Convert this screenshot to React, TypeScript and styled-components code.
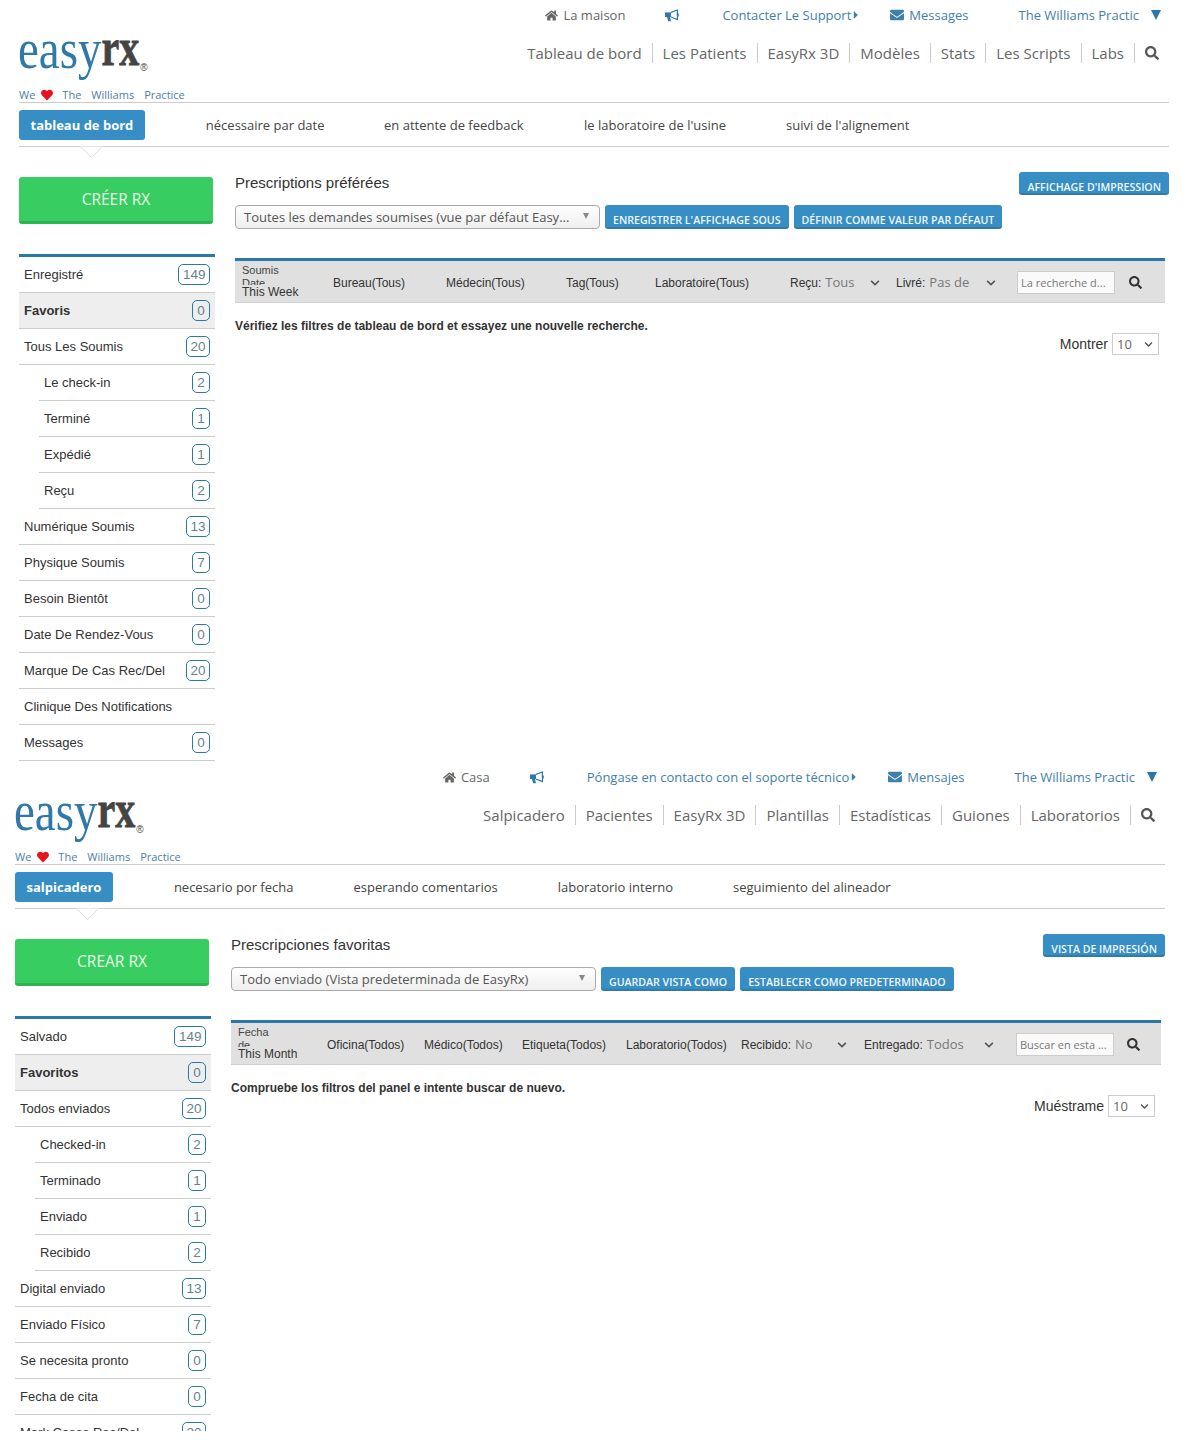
import React from "react";
import styled, { createGlobalStyle } from "styled-components";
import { FaHome, FaEnvelope, FaSearch, FaCaretRight, FaHeart, FaChevronDown } from "react-icons/fa";

const Global = createGlobalStyle`
  html, body { margin: 0; padding: 0; background: #fff; }
  * { box-sizing: border-box; }
`;

const SANS = `"Liberation Sans", Arial, sans-serif`;
const OPEN = `"Open Sans", "Noto Sans", sans-serif`;
const BLUE = "#2a78a8";
const BTN = "#368ec4";

const Page = styled.div`
  height: 1431px;
  overflow: hidden;
  background: #fff;
`;

const Section = styled.section<{ $left: number; $height: number }>`
  margin-left: ${(p) => p.$left}px;
  width: 1150px;
  height: ${(p) => p.$height}px;
`;

const TopBar = styled.div`
  height: 30px;
  display: flex;
  justify-content: flex-end;
  align-items: center;
  padding-right: 8px;
  font: 13px/30px ${OPEN};
  color: #2f78a8;
`;
const TopItem = styled.span<{ $gap: number; $grey?: boolean }>`
  display: inline-flex;
  align-items: center;
  margin-left: ${(p) => p.$gap}px;
  color: ${(p) => (p.$grey ? "#666" : "#3f80ab")};
  white-space: nowrap;
  svg { flex: none; }
`;
const IconLeft = styled.span<{ $w: number }>`
  display: inline-flex;
  width: ${(p) => p.$w}px;
`;
const CaretIcon = styled(FaCaretRight)`
  margin-left: -1px;
`;
const HornIcon = styled.svg`
  width: 14px;
  height: 13px;
  color: #2f78a8;
`;
const Triangle = styled.span`
  width: 0;
  height: 0;
  margin-left: 12px;
  border-left: 5px solid transparent;
  border-right: 5px solid transparent;
  border-top: 10px solid ${BLUE};
`;

const BrandRow = styled.div`
  height: 73px;
  display: flex;
  justify-content: space-between;
  align-items: flex-start;
  border-bottom: 1px solid #ccc;
`;
const BrandBlock = styled.div`
  display: flex;
  flex-direction: column;
`;
const Logo = styled.div`
  height: 58px;
  display: flex;
  align-items: flex-start;
  white-space: nowrap;
  line-height: 1;
`;
const LogoEasy = styled.span`
  font: 47px/47px "Liberation Serif", serif;
  color: #2f78a8;
  transform: scaleY(1.22);
  transform-origin: 0 36px;
  margin: -2px 0 0 -1px;
  height: 47px;
`;
const LogoRx = styled.span`
  font: bold 40px/47px "Liberation Serif", serif;
  color: #444;
  -webkit-text-stroke: 0.6px #444;
  transform: scaleY(1.3);
  transform-origin: 0 36px;
  margin-top: -2px;
  height: 47px;
`;
const LogoMark = styled.span`
  font: 10px/10px ${SANS};
  color: #444;
  margin: 33px 0 0 1px;
`;
const Tagline = styled.div`
  display: flex;
  align-items: center;
  height: 14px;
  font: 11px/14px ${OPEN};
  color: #4a80a8;
`;
const TagWord = styled.span<{ $gap?: number }>`
  margin-right: ${(p) => p.$gap ?? 10}px;
`;
const TagHeart = styled.span`
  display: inline-flex;
  color: #e8141c;
  margin-right: 9px;
`;

const MainNav = styled.nav`
  display: flex;
  align-items: center;
  margin-top: 13px;
  padding-right: 10px;
  height: 20px;
`;
const NavLink = styled.span`
  padding: 0 10px;
  height: 20px;
  font: 15px/20px ${OPEN};
  color: #666;
  border-right: 1px solid #ccc;
  white-space: nowrap;
`;
const NavSearch = styled.span`
  display: inline-flex;
  margin-left: 10px;
  color: #555;
`;

const Tabs = styled.div`
  position: relative;
  height: 44px;
  padding-top: 7px;
  display: flex;
  align-items: flex-start;
  border-bottom: 1px solid #ccc;
  font: 13px/30px ${OPEN};
  color: #444;
`;
const ActiveTab = styled.span`
  height: 30px;
  padding: 0 11.5px;
  background: ${BTN};
  color: #fff;
  font-weight: 700;
  border-radius: 3px;
  white-space: nowrap;
`;
const Tab = styled.span<{ $gap: number }>`
  margin-left: ${(p) => p.$gap}px;
  white-space: nowrap;
`;
const Notch = styled.span`
  position: absolute;
  left: 63.5px;
  top: 34.5px;
  width: 17px;
  height: 17px;
  background: #fff;
  border-right: 1px solid #ddd;
  border-bottom: 1px solid #ddd;
  transform: rotate(45deg);
  clip-path: polygon(100% 0, 100% 100%, 0 100%);
`;

const Body = styled.div`
  display: grid;
  grid-template-columns: 196px 1fr;
  column-gap: 20px;
`;
const Sidebar = styled.aside`
  padding-top: 30px;
`;
const CreateButton = styled.div`
  width: 194px;
  height: 47px;
  background: #37cd60;
  border-bottom: 3px solid #2eb354;
  border-radius: 3px;
  text-align: center;
  font: 15.5px/44px ${OPEN};
  color: #e9fbe9;
`;
const SideList = styled.ul`
  list-style: none;
  margin: 30px 0 0;
  padding: 0;
  border-top: 3px solid ${BLUE};
`;
const SideRow = styled.li<{ $sub?: boolean; $active?: boolean }>`
  height: 36px;
  margin-left: ${(p) => (p.$sub ? 20 : 0)}px;
  padding: 0 5px;
  display: flex;
  align-items: center;
  justify-content: space-between;
  border-bottom: 1px solid #ccc;
  background: ${(p) => (p.$active ? "#eee" : "transparent")};
  font: ${(p) => (p.$active ? "bold" : "normal")} 13px/20px ${SANS};
  color: #333;
`;
const Badge = styled.span`
  min-width: 18px;
  height: 21px;
  padding: 0 3.5px;
  text-align: center;
  border: 1px solid ${BLUE};
  border-radius: 5px;
  font: 13.5px/19px ${SANS};
  color: #667f92;
`;

const Main = styled.div`
  padding-top: 25px;
  min-width: 0;
`;
const TitleRow = styled.div`
  height: 23px;
  display: flex;
  justify-content: space-between;
  align-items: center;
`;
const Title = styled.h2`
  margin: 0 0 2px;
  font: 15px/22px ${SANS};
  color: #333;
`;
const ActionButton = styled.span<{ $gap?: number; $h?: number }>`
  height: ${(p) => p.$h ?? 24}px;
  margin-left: ${(p) => p.$gap ?? 0}px;
  padding: 8px 8px 0;
  background: ${BTN};
  border-bottom: 2px solid #2f7cab;
  border-radius: 3px;
  font: 600 10.6px/14px ${OPEN};
  color: #f1f7fb;
  white-space: nowrap;
`;
const ViewRow = styled.div`
  margin-top: 10px;
  height: 24px;
  display: flex;
`;
const ViewSelect = styled.div`
  width: 365px;
  height: 24px;
  padding: 0 10px 0 8px;
  display: flex;
  align-items: center;
  justify-content: space-between;
  border: 1px solid #aaa;
  border-radius: 4px;
  background: linear-gradient(#fff, #eee);
  font: 13px/22px ${OPEN};
  color: #555;
  white-space: nowrap;
`;
const SelectArrow = styled.span`
  width: 0;
  height: 0;
  margin-bottom: 3px;
  border-left: 3.5px solid transparent;
  border-right: 3.5px solid transparent;
  border-top: 6px solid #888;
`;

const FilterBar = styled.div<{ $cols: string; $pad: number }>`
  margin-top: 29px;
  margin-right: 4px;
  height: 45px;
  padding: 2px 0 0 ${(p) => p.$pad}px;
  display: grid;
  grid-template-columns: ${(p) => p.$cols};
  align-items: center;
  background: #e0e0e0;
  border-top: 3px solid ${BLUE};
  border-bottom: 1px solid #d0d0d0;
  font: 12px/14px ${SANS};
  color: #333;
`;
const DateCell = styled.div`
  display: flex;
  flex-direction: column;
  margin-top: -4px;
`;
const DateLabel = styled.div`
  width: 42px;
  height: 21px;
  overflow: hidden;
  font: 11px/13px ${SANS};
  color: #444;
`;
const DateValue = styled.div`
  margin-top: 1px;
  font: 12px/12px ${SANS};
  color: #333;
  white-space: nowrap;
`;
const FilterCell = styled.span`
  white-space: nowrap;
`;
const DropCell = styled.div<{ $pad: number }>`
  display: flex;
  justify-content: space-between;
  align-items: center;
  padding-right: ${(p) => p.$pad}px;
  white-space: nowrap;
`;
const DropValue = styled.span`
  font: 13px/14px ${OPEN};
  color: #777;
  margin-left: 4px;
`;
const SearchBox = styled.div`
  width: 98px;
  height: 23px;
  padding-left: 3px;
  background: #fafafa;
  border: 1px solid #ccc;
  font: 11px/21px ${OPEN};
  color: #777;
  white-space: nowrap;
  overflow: hidden;
`;
const BarSearch = styled.span`
  display: inline-flex;
  margin-left: 14px;
  color: #333;
`;
const Message = styled.p`
  margin: 16px 0 0;
  font: bold 12px/14px ${SANS};
  color: #333;
`;
const ShowRow = styled.div`
  padding-right: 10px;
  display: flex;
  justify-content: flex-end;
  align-items: center;
  font: 14px/22px ${SANS};
  color: #333;
`;
const ShowSelect = styled.span`
  width: 47px;
  height: 22px;
  margin-left: 4px;
  padding: 0 5px 0 4px;
  display: flex;
  align-items: center;
  justify-content: space-between;
  border: 1px solid #ccc;
  font: 13px/20px ${OPEN};
  color: #666;
`;
const Chevron = styled(FaChevronDown)`
  color: #555;
`;

type Row = { label: string; count?: number; sub?: boolean; active?: boolean };
type Data = {
  left: number;
  height: number;
  home: string;
  support: string;
  messages: string;
  nav: string[];
  active: string;
  tabs: string[];
  tabGaps: number[];
  create: string;
  title: string;
  print: string;
  view: string;
  save: string;
  setDefault: string;
  cols: string;
  dateLabel: string;
  dateValue: string;
  filters: string[];
  drop1: [string, string, number];
  drop2: [string, string, number];
  placeholder: string;
  message: string;
  show: string;
  rows: Row[];
};

const pages: Data[] = [
  {
    left: 19,
    height: 762,
    home: "La maison",
    support: "Contacter Le Support",
    messages: "Messages",
    nav: ["Tableau de bord", "Les Patients", "EasyRx 3D", "Modèles", "Stats", "Les Scripts", "Labs"],
    active: "tableau de bord",
    tabs: ["nécessaire par date", "en attente de feedback", "le laboratoire de l'usine", "suivi de l'alignement"],
    tabGaps: [61, 59.5, 60.5, 60],
    create: "CRÉER RX",
    title: "Prescriptions préférées",
    print: "AFFICHAGE D'IMPRESSION",
    view: "Toutes les demandes soumises (vue par défaut Easy...",
    save: "ENREGISTRER L'AFFICHAGE SOUS",
    setDefault: "DÉFINIR COMME VALEUR PAR DÉFAUT",
    cols: "91px 113px 120px 89px 135px 106px 121px 98px auto",
    dateLabel: "Soumis Date",
    dateValue: "This Week",
    filters: ["Bureau(Tous)", "Médecin(Tous)", "Tag(Tous)", "Laboratoire(Tous)"],
    drop1: ["Reçu:", "Tous", 16],
    drop2: ["Livré:", "Pas de", 21],
    placeholder: "La recherche d...",
    message: "Vérifiez les filtres de tableau de bord et essayez une nouvelle recherche.",
    show: "Montrer",
    rows: [
      { label: "Enregistré", count: 149 },
      { label: "Favoris", count: 0, active: true },
      { label: "Tous Les Soumis", count: 20 },
      { label: "Le check-in", count: 2, sub: true },
      { label: "Terminé", count: 1, sub: true },
      { label: "Expédié", count: 1, sub: true },
      { label: "Reçu", count: 2, sub: true },
      { label: "Numérique Soumis", count: 13 },
      { label: "Physique Soumis", count: 7 },
      { label: "Besoin Bientôt", count: 0 },
      { label: "Date De Rendez-Vous", count: 0 },
      { label: "Marque De Cas Rec/Del", count: 20 },
      { label: "Clinique Des Notifications" },
      { label: "Messages", count: 0 },
    ],
  },
  {
    left: 15,
    height: 669,
    home: "Casa",
    support: "Póngase en contacto con el soporte técnico",
    messages: "Mensajes",
    nav: ["Salpicadero", "Pacientes", "EasyRx 3D", "Plantillas", "Estadísticas", "Guiones", "Laboratorios"],
    active: "salpicadero",
    tabs: ["necesario por fecha", "esperando comentarios", "laboratorio interno", "seguimiento del alineador"],
    tabGaps: [61, 60, 60, 60],
    create: "CREAR RX",
    title: "Prescripciones favoritas",
    print: "VISTA DE IMPRESIÓN",
    view: "Todo enviado (Vista predeterminada de EasyRx)",
    save: "GUARDAR VISTA COMO",
    setDefault: "ESTABLECER COMO PREDETERMINADO",
    cols: "89px 97px 98px 104px 115px 123px 152px 97px auto",
    dateLabel: "Fecha de Envío",
    dateValue: "This Month",
    filters: ["Oficina(Todos)", "Médico(Todos)", "Etiqueta(Todos)", "Laboratorio(Todos)"],
    drop1: ["Recibido:", "No", 17],
    drop2: ["Entregado:", "Todos", 22],
    placeholder: "Buscar en esta ...",
    message: "Compruebe los filtros del panel e intente buscar de nuevo.",
    show: "Muéstrame",
    rows: [
      { label: "Salvado", count: 149 },
      { label: "Favoritos", count: 0, active: true },
      { label: "Todos enviados", count: 20 },
      { label: "Checked-in", count: 2, sub: true },
      { label: "Terminado", count: 1, sub: true },
      { label: "Enviado", count: 1, sub: true },
      { label: "Recibido", count: 2, sub: true },
      { label: "Digital enviado", count: 13 },
      { label: "Enviado Físico", count: 7 },
      { label: "Se necesita pronto", count: 0 },
      { label: "Fecha de cita", count: 0 },
      { label: "Mark Cases Rec/Del", count: 20 },
    ],
  },
];

function Horn() {
  return (
    <HornIcon viewBox="0 0 14 13" aria-hidden="true">
      <path d="M0 3.4h6v4.6H0z" fill="currentColor" />
      <path d="M2 8h3l1 4.2H3.2z" fill="currentColor" />
      <path d="M6 3.4 12.4 1v9.6L6 8" fill="none" stroke="currentColor" strokeWidth="1.2" />
      <path d="M12.6 4.4h1.2v3h-1.2z" fill="currentColor" />
    </HornIcon>
  );
}

function EasySection({ d }: { d: Data }) {
  return (
    <Section $left={d.left} $height={d.height}>
      <TopBar>
        <TopItem $gap={0} $grey>
          <IconLeft $w={18}>
            <FaHome size={13} />
          </IconLeft>
          {d.home}
        </TopItem>
        <TopItem $gap={40}>
          <Horn />
        </TopItem>
        <TopItem $gap={43}>
          {d.support}
          <CaretIcon size={12} />
        </TopItem>
        <TopItem $gap={28}>
          <IconLeft $w={19}>
            <FaEnvelope size={14} />
          </IconLeft>
          {d.messages}
        </TopItem>
        <TopItem $gap={50}>The Williams Practic</TopItem>
        <Triangle />
      </TopBar>

      <BrandRow>
        <BrandBlock>
          <Logo>
            <LogoEasy>easy</LogoEasy>
            <LogoRx>rx</LogoRx>
            <LogoMark>®</LogoMark>
          </Logo>
          <Tagline>
            <TagWord $gap={6}>We</TagWord>
            <TagHeart>
              <FaHeart size={12} />
            </TagHeart>
            <TagWord>The</TagWord>
            <TagWord>Williams</TagWord>
            <TagWord>Practice</TagWord>
          </Tagline>
        </BrandBlock>
        <MainNav>
          {d.nav.map((n) => (
            <NavLink key={n}>{n}</NavLink>
          ))}
          <NavSearch>
            <FaSearch size={14} />
          </NavSearch>
        </MainNav>
      </BrandRow>

      <Tabs>
        <ActiveTab>{d.active}</ActiveTab>
        {d.tabs.map((t, i) => (
          <Tab key={t} $gap={d.tabGaps[i]}>
            {t}
          </Tab>
        ))}
        <Notch />
      </Tabs>

      <Body>
        <Sidebar>
          <CreateButton>{d.create}</CreateButton>
          <SideList>
            {d.rows.map((r) => (
              <SideRow key={r.label} $sub={r.sub} $active={r.active}>
                <span>{r.label}</span>
                {r.count !== undefined && <Badge>{r.count}</Badge>}
              </SideRow>
            ))}
          </SideList>
        </Sidebar>

        <Main>
          <TitleRow>
            <Title>{d.title}</Title>
            <ActionButton $h={23}>{d.print}</ActionButton>
          </TitleRow>
          <ViewRow>
            <ViewSelect>
              <span>{d.view}</span>
              <SelectArrow />
            </ViewSelect>
            <ActionButton $gap={5}>{d.save}</ActionButton>
            <ActionButton $gap={5}>{d.setDefault}</ActionButton>
          </ViewRow>

          <FilterBar $cols={d.cols} $pad={7}>
            <DateCell>
              <DateLabel>{d.dateLabel}</DateLabel>
              <DateValue>{d.dateValue}</DateValue>
            </DateCell>
            {d.filters.map((f) => (
              <FilterCell key={f}>{f}</FilterCell>
            ))}
            <DropCell $pad={d.drop1[2]}>
              <span>
                {d.drop1[0]}
                <DropValue>{d.drop1[1]}</DropValue>
              </span>
              <Chevron size={10} />
            </DropCell>
            <DropCell $pad={d.drop2[2]}>
              <span>
                {d.drop2[0]}
                <DropValue>{d.drop2[1]}</DropValue>
              </span>
              <Chevron size={10} />
            </DropCell>
            <SearchBox>{d.placeholder}</SearchBox>
            <BarSearch>
              <FaSearch size={13} />
            </BarSearch>
          </FilterBar>

          <Message>{d.message}</Message>
          <ShowRow>
            {d.show}
            <ShowSelect>
              10
              <Chevron size={9} />
            </ShowSelect>
          </ShowRow>
        </Main>
      </Body>
    </Section>
  );
}

export default function App() {
  return (
    <Page>
      <Global />
      {pages.map((d) => (
        <EasySection key={d.left} d={d} />
      ))}
    </Page>
  );
}
